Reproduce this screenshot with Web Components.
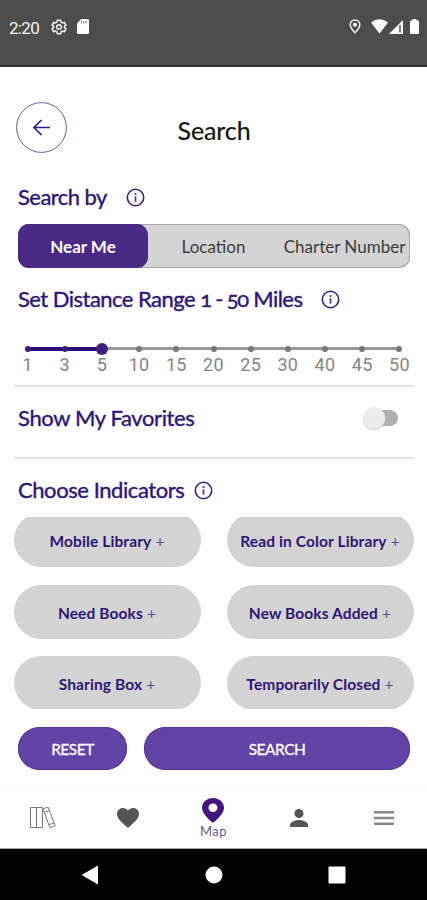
<!DOCTYPE html>
<html lang="en">
<head>
<meta charset="utf-8">
<meta name="viewport" content="width=device-width, initial-scale=1">
<title>Search</title>
<style>
  body {
    margin: 0;
    background: #fff;
    font-family: Lato, "Liberation Sans", sans-serif;
    color: #2f1674;
  }
</style>
</head>
<body>
<search-screen></search-screen>

<script>
const define = (name, html, setup) => {
  const template = document.createElement("template");
  template.innerHTML = html;
  customElements.define(name, class extends HTMLElement {
    constructor() {
      super();
      this.attachShadow({ mode: "open" }).appendChild(template.content.cloneNode(true));
    }
    connectedCallback() {
      if (setup) setup(this, this.shadowRoot);
    }
  });
};

define("status-bar", `
  <style>
    :host {
      display: flex;
      box-sizing: border-box;
      height: 67px;
      padding: 0 8px 12px 9px;
      align-items: center;
      background: #4d4d4d;
      border-bottom: 2px solid #393636;
      color: #f4f4f4;
      font: 17px Roboto, sans-serif;
    }
    .time { width: 42px; padding-top: 2px; letter-spacing: -.7px; }
    .gap { flex: 1; }
    svg { display: block; fill: #fff; }
  </style>
  <span class="time">2:20</span>
  <svg width="16" height="16" viewBox="0 0 16 16" style="margin-right:10px"><path d="M6.4 1.2h3.2l.5 1.9 1.3.8 1.9-.5 1.6 2.700-1.400 1.300v1.300l1.400 1.300-1.600 2.700-1.900-.6-1.300.8-.5 1.900H6.400l-.5-1.900-1.300-.8-1.900.6L1.100 10l1.400-1.300V7.400L1.100 6.100l1.600-2.700 1.900.5 1.300-.8z" fill="none" stroke="#eee" stroke-width="1.600"/><circle cx="8" cy="8" r="2.300" fill="none" stroke="#eee" stroke-width="1.500"/></svg>
  <svg width="12" height="15" viewBox="0 0 13 15" preserveAspectRatio="none"><path d="M4.500 0H11.500Q13 0 13 1.500V13.500Q13 15 11.500 15H1.500Q0 15 0 13.500V4.500z"/><path d="M5 2v2.500M7.400 2v2.500M9.800 2v2.500" stroke="#777" stroke-width="1"/></svg>
  <span class="gap"></span>
  <svg width="12" height="15" viewBox="0 0 12 15" style="margin-right:10px"><path d="M6 1C3.200 1 1.200 3 1.200 5.600 1.200 9 6 13.800 6 13.800S10.800 9 10.800 5.600C10.800 3 8.800 1 6 1z" fill="none" stroke="#eee" stroke-width="1.500"/><circle cx="6" cy="5.800" r="2"/></svg>
  <svg width="17" height="15" viewBox="0 0 17 15" style="margin-right:1px"><path d="M0 3.500Q8.500-3 17 3.500L8.500 14.500z"/></svg>
  <svg width="14" height="14" viewBox="0 0 14 14" style="margin-right:7px"><path d="M0 14L14 0V14z"/><path d="M11 5v7.500" stroke="#4d4d4d" stroke-width="1.500"/></svg>
  <svg width="9" height="15" viewBox="0 0 9 15"><path d="M2.500 1.500V0h4v1.500H8Q9 1.500 9 2.500V14Q9 15 8 15H1Q0 15 0 14V2.500Q0 1.500 1 1.500z"/></svg>
`);

define("page-header", `
  <style>
    :host {
      display: grid;
      grid-template-columns: 51px 1fr 51px;
      align-items: center;
      height: 51px;
      padding: 35px 15px 0 16px;
    }
    svg { display: block; }
    h1 {
      margin: 5px 0 0;
      text-align: center;
      color: #16120f;
      font-size: 25px;
      line-height: 30px;
      font-weight: 400;
      letter-spacing: -.1px;
      -webkit-text-stroke: .2px;
    }
  </style>
  <svg width="51" height="51" viewBox="0 0 51 51" fill="none" stroke="#321a80">
    <circle cx="25.500" cy="25.500" r="24.900" stroke-width="1" stroke="#675a9c"/>
    <path d="M34 25.500H18.500M25.500 18l-7.500 7.500 7.500 7.500" stroke-width="1.700"/>
  </svg>
  <h1><slot></slot></h1>
`);

define("info-icon", `
  <style>
    :host { display: block; width: 19px; height: 19px; }
    svg { display: block; }
  </style>
  <svg width="19" height="19" viewBox="0 0 19 19">
    <circle cx="9.500" cy="9.500" r="8.200" fill="none" stroke="#38207c" stroke-width="1.600"/>
    <path d="M9.500 8.300v5.500M9.500 5v1.900" stroke="#4c388b" stroke-width="1.700"/>
  </svg>
`);

define("section-title", `
  <style>
    :host { display: flex; align-items: center; height: 28px; padding-left: 18px; }
    .text {
      font-size: 22px;
      line-height: 28px;
      white-space: nowrap;
      -webkit-text-stroke: .4px;
      width: var(--text-width);
      letter-spacing: var(--tracking, 0);
    }
  </style>
  <span class="text"><slot></slot></span>
  <slot name="end"></slot>
`);

define("segmented-control", `
  <style>
    :host {
      display: grid;
      grid-template-columns: 130px 131px 131px;
      box-sizing: border-box;
      height: 44px;
      margin: 0 17px 0 18px;
      background: #d3d3d3;
      border-radius: 11px;
      box-shadow: inset 0 0 0 1px #a6a6a6;
    }
    ::slotted(span) {
      display: flex;
      align-items: center;
      justify-content: center;
      padding-top: 1px;
      font-size: 17px;
      color: #3c3c3c;
      white-space: nowrap;
    }
    ::slotted([selected]) {
      background: #4b2a85;
      color: #fff;
      border-radius: 11px;
      font-weight: 700;
    }
  </style>
  <slot></slot>
`);

define("range-slider", `
  <style>
    :host { display: block; padding: 0 9px; height: 36px; }
    .stops {
      display: grid;
      grid-template-columns: repeat(11, 1fr);
      text-align: center;
      font: 18px/20px Roboto, sans-serif;
      color: #858585;
      letter-spacing: .3px;
    }
    .stop { display: grid; grid-template-rows: 13px 21px; justify-items: center; }
    .mark { display: flex; align-items: center; width: 100%; height: 13px; }
    .mark::before, .mark::after { content: ""; flex: 1; height: 3px; background: #999; }
    .mark::before { order: 0; }
    .dot { order: 1; width: 6px; height: 6px; margin: 0 -1px; border-radius: 50%; background: #777; z-index: 1; }
    .mark::after { order: 2; }
    .past::before, .past::after, .current::before { background: #2f0875; height: 4px; }
    .past .dot { background: #3c1b7d; }
    .current .dot { width: 12px; height: 12px; background: #43207f; }
    .stop:first-child .mark::before, .stop:last-child .mark::after { background: none; }
  </style>
  <div class="stops"></div>
`, (host, root) => {
  const values = host.getAttribute("values").split(",");
  const current = values.indexOf(host.getAttribute("value"));
  root.querySelector(".stops").innerHTML = values.map((value, i) => {
    const state = i < current ? "past" : i === current ? "current" : "";
    return `<div class="stop"><div class="mark ${state}"><span class="dot"></span></div><span>${value}</span></div>`;
  }).join("");
});

define("toggle-switch", `
  <style>
    :host {
      display: flex;
      align-items: center;
      width: 33px;
      height: 16px;
      margin-left: auto;
      margin-right: 29px;
      background: #b0b0b0;
      border-radius: 8px;
    }
    span {
      width: 22px;
      height: 22px;
      margin-left: -2px;
      border-radius: 50%;
      background: #ececec;
      box-shadow: 0 1px 1px #ccc;
    }
  </style>
  <span></span>
`);

define("indicator-grid", `
  <style>
    :host {
      display: grid;
      grid-template-columns: 187px 187px;
      grid-auto-rows: 54px;
      gap: 17.5px 26px;
      justify-content: center;
      align-content: end;
      height: 193px;
      clip-path: inset(0 0 1px);
    }
  </style>
  <slot></slot>
`);

define("indicator-pill", `
  <style>
    :host {
      display: flex;
      align-items: center;
      justify-content: center;
      box-sizing: border-box;
      padding-top: 2px;
      border-radius: 27px;
      background: #d3d3d3;
      font-size: 15.5px;
      font-weight: 700;
      white-space: pre;
      letter-spacing: .12px;
    }
    i { font-style: normal; font-weight: 400; color: #5c4d8b; }
  </style>
  <slot></slot><i> +</i>
`);

define("action-button", `
  <style>
    :host {
      display: flex;
      align-items: center;
      justify-content: center;
      height: 43px;
      border-radius: 22px;
      background: #6244a4;
      box-shadow: inset 0 0 0 1px #563698;
      color: #fff;
      font-size: 15.5px;
      letter-spacing: -.5px;
      -webkit-text-stroke: .3px;
    }
  </style>
  <slot></slot>
`);

define("tab-bar", `
  <style>
    :host {
      display: grid;
      grid-template-columns: repeat(5, 1fr);
      align-items: center;
      justify-items: center;
      box-sizing: border-box;
      height: 63px;
      border-top: 1px solid #f5f5f5;
      border-bottom: 1px solid #aaa;
    }
    svg { display: block; }
    .active { display: grid; justify-items: center; row-gap: 1px; padding-top: 2px; font-size: 13px; line-height: 15px; color: #67568f; letter-spacing: .5px; }
  </style>
  <svg width="28" height="23" viewBox="0 0 28 23" fill="none" stroke="#777" stroke-width="1"><path d="M1.500 1.500h6v20h-6zM7.500 1.500h6v20h-6zM14 2.800l5.200-1.700 7 18.500-5.300 2zM15.400 6.200l5.200-1.700M19.900 18.700l5.200-1.900"/></svg>
  <svg width="22" height="20" viewBox="0 0 22 20" fill="#555"><path d="M11 20L9.400 18.500C3.800 13.500 0 10.100 0 5.900 0 2.600 2.600 0 6 0c1.900 0 3.800.9 5 2.400C12.200.9 14.100 0 16 0c3.400 0 6 2.600 6 5.900 0 4.200-3.800 7.600-9.400 12.600z"/></svg>
  <div class="active">
    <svg width="22" height="25" viewBox="0 0 22 27" preserveAspectRatio="none" fill="#43167e"><path fill-rule="evenodd" d="M11 0C4.900 0 0 4.700 0 10.600 0 18 11 27 11 27s11-9 11-16.400C22 4.700 17.100 0 11 0zm0 6a4.500 4.500 0 110 9 4.500 4.500 0 010-9z"/></svg>
    <span>Map</span>
  </div>
  <svg width="18" height="18" viewBox="0 0 18 18" fill="#555"><circle cx="9" cy="4.500" r="4.500"/><path d="M0 18v-2.300c0-3 6-4.700 9-4.700s9 1.700 9 4.700V18z"/></svg>
  <svg width="20" height="16" viewBox="0 0 20 16" fill="#888"><path d="M0 1h20v2.500H0zM0 6.700h20v2.500H0zM0 12.400h20v2.500H0z"/></svg>
`);

define("system-nav", `
  <style>
    :host {
      display: grid;
      grid-template-columns: repeat(3, 18px);
      column-gap: 105px;
      justify-content: center;
      align-items: center;
      height: 51px;
      background: #000;
    }
    svg { display: block; fill: #fff; }
  </style>
  <svg width="18" height="20" viewBox="0 0 18 20"><path d="M16 .5v19L-.5 10z"/></svg>
  <svg width="18" height="18" viewBox="0 0 18 18"><circle cx="9" cy="9" r="8.500"/></svg>
  <svg width="18" height="18" viewBox="0 0 18 18"><rect x=".500" y=".500" width="17" height="17" rx="1"/></svg>
`);

define("search-screen", `
  <style>
    :host { display: flex; flex-direction: column; width: 427px; height: 900px; overflow: hidden; }
    .by { margin-top: 30px; }
    segmented-control { margin-top: 13px; }
    .distance { margin-top: 17px; }
    range-slider { margin-top: 29px; }
    hr { width: 400px; height: 2px; margin: 0 auto; border: 0; background: #e3e3e3; flex: none; }
    .first { margin-top: 7px; }
    .favorites { height: 62px; margin-bottom: 8px; }
    .indicators { margin-top: 17px; }
    indicator-grid { margin-top: 13px; }
    .old { font-variant-numeric: oldstyle-nums; font-feature-settings: "onum"; letter-spacing: -1.2px; }
    .actions {
      display: grid;
      grid-template-columns: 109px 266px;
      gap: 17px;
      padding: 17px 18px 0;
    }
    tab-bar { margin-top: 16px; }
  </style>
  <status-bar></status-bar>
  <page-header>Search</page-header>
  <section-title class="by" style="--text-width:108px;--tracking:-.55px">Search by<info-icon slot="end"></info-icon></section-title>
  <segmented-control><span selected>Near Me</span><span>Location</span><span>Charter Number</span></segmented-control>
  <section-title class="distance" style="--text-width:303px;--tracking:-.53px">Set Distance Range <span class="old">1 - 50</span> Miles<info-icon slot="end"></info-icon></section-title>
  <range-slider values="1,3,5,10,15,20,25,30,40,45,50" value="5"></range-slider>
  <hr class="first">
  <section-title class="favorites" style="--tracking:-.37px">Show My Favorites<toggle-switch slot="end"></toggle-switch></section-title>
  <hr>
  <section-title class="indicators" style="--text-width:176px;--tracking:-.43px">Choose Indicators<info-icon slot="end"></info-icon></section-title>
  <indicator-grid>
    <indicator-pill>Mobile Library</indicator-pill>
    <indicator-pill>Read in Color Library</indicator-pill>
    <indicator-pill>Need Books</indicator-pill>
    <indicator-pill>New Books Added</indicator-pill>
    <indicator-pill>Sharing Box</indicator-pill>
    <indicator-pill>Temporarily Closed</indicator-pill>
  </indicator-grid>
  <div class="actions"><action-button>RESET</action-button><action-button>SEARCH</action-button></div>
  <tab-bar></tab-bar>
  <system-nav></system-nav>
`);
</script>
</body>
</html>
